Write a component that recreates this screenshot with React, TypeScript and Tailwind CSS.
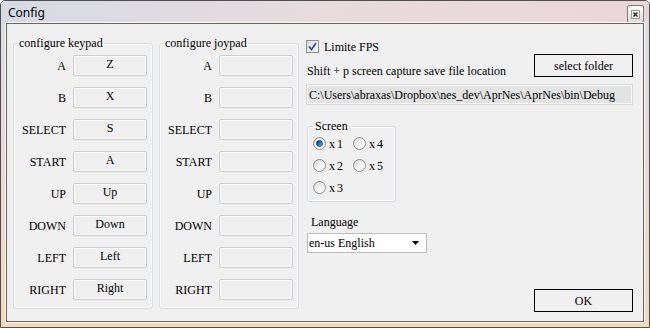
import React from "react";

const keys = ["A", "B", "SELECT", "START", "UP", "DOWN", "LEFT", "RIGHT"];
const keypad = ["Z", "X", "S", "A", "Up", "Down", "Left", "Right"];

function Field({ value }: { value?: string }) {
  return (
    <div className="w-[74px] h-[21px] rounded-[2px] border border-[#cdcdcd] bg-[#f0f0f0] shadow-[inset_0_0_0_1px_#fbfbfb] flex justify-center text-[12px] leading-[17px] text-black">
      {value ?? ""}
    </div>
  );
}

function Group({ title, values }: { title: string; values?: string[] }) {
  return (
    <fieldset className="w-[140px] rounded-[3px] border border-[#d5dfe5] px-[5px] pt-[5px] pb-[8px] shadow-[inset_0_0_0_1px_#fafafa]">
      <legend className="px-[1px] -ml-[1px] text-[12px] leading-[14px] text-black">{title}</legend>
      <div className="flex flex-col gap-[11px]">
        {keys.map((k, i) => (
          <div key={k} className="flex items-center gap-[7px]">
            <div className="w-[47px] text-right text-[12px] leading-[14px] text-black">{k}</div>
            <Field value={values ? values[i] : undefined} />
          </div>
        ))}
      </div>
    </fieldset>
  );
}

function Radio({ checked, label }: { checked?: boolean; label: string }) {
  return (
    <div className="flex items-center h-[13px] gap-[3px]">
      <div className="w-[13px] h-[13px] rounded-full border border-[#8e8f8f] bg-gradient-to-br from-[#d6d6d6] via-[#f4f4f4] to-[#ffffff] flex items-center justify-center">
        {checked ? (
          <div className="w-[7px] h-[7px] rounded-full bg-gradient-to-br from-[#0d3f7a] via-[#1c78c8] to-[#5ec3f7] border border-[#0f3e74]" />
        ) : null}
      </div>
      <span className="text-[12px] leading-[14px] tracking-[2px] text-black">{label}</span>
    </div>
  );
}

export default function App() {
  return (
    <div className="w-[650px] h-[328px] border border-[#505050] rounded-t-[5px] flex flex-col bg-gradient-to-b from-[#dcdfe7] via-[#ead9dc] to-[#f3dbb8] overflow-hidden font-['Liberation_Serif','DejaVu_Serif',serif]">
      {/* title bar */}
      <div className="h-[22px] flex items-center justify-between bg-gradient-to-r from-[#d6dae4] via-[#e8dcdf] to-[#ead6da] pl-[7px] pr-[5px]">
        <span className="text-[12px] leading-[16px] text-black mt-[1px] font-['Noto_Sans','Open_Sans',sans-serif]">
          Config
        </span>
        <div className="w-[17px] h-[18px] mt-[4px] rounded-[2px] border border-[#7d7d7d] bg-gradient-to-b from-[#ffffff] to-[#dcdcdc] flex items-center justify-center">
          <svg width="9" height="9" viewBox="0 0 9 9">
            <rect x="0.5" y="0.5" width="8" height="8" fill="#f4f4f4" stroke="#9a9a9a" />
            <path d="M2.5 2.5 L6.5 6.5 M6.5 2.5 L2.5 6.5" stroke="#222" strokeWidth="1.3" />
          </svg>
        </div>
      </div>

      {/* body with frame */}
      <div className="flex-1 px-[5px] pb-[5px] flex">
        <div className="flex-1 border border-[#646464] shadow-[0_0_0_1px_#fff8ee] bg-[#f0f0f0] flex items-start pl-[6px] pt-[12px]">
          <Group title="configure keypad" values={keypad} />
          <div className="ml-[6px]">
            <Group title="configure joypad" />
          </div>

          {/* right column */}
          <div className="ml-[7px] w-[327px] pt-[4px] flex flex-col">
            <div className="h-[13px] flex items-center gap-[5px]">
              <div className="w-[13px] h-[13px] border border-[#8e8f8f] bg-gradient-to-br from-[#d8d8d8] to-[#ffffff] flex items-center justify-center">
                <svg width="9" height="9" viewBox="0 0 9 9">
                  <path d="M1 4.5 L3.5 7.5 L8 1" fill="none" stroke="#2c4f9e" strokeWidth="1.8" />
                </svg>
              </div>
              <span className="text-[12px] leading-[14px] text-black">Limite FPS</span>
            </div>

            <div className="mt-[1px] flex items-end justify-between">
              <span className="ml-[1px] mb-[-1px] text-[12px] leading-[14px] text-black">
                Shift + p screen capture save file location
              </span>
              <button className="w-[99px] h-[23px] border border-black bg-[#f0f0f0] text-[12px] leading-[14px] text-black">
                select folder
              </button>
            </div>

            <div className="mt-[7px] h-[21px] border border-[#dadada] bg-[#e3e3e3] flex items-center pl-[2px] text-[12px] leading-[14px] text-black shadow-[inset_0_0_0_1px_#f7f7f7]">
              C:\Users\abraxas\Dropbox\nes_dev\AprNes\AprNes\bin\Debug
            </div>

            <fieldset className="mt-[14px] ml-[1px] w-[89px] rounded-[3px] border border-[#d5dfe5] pl-[5px] pt-[4px] pb-[7px] shadow-[inset_0_0_0_1px_#fafafa]">
              <legend className="ml-[1px] px-[1px] text-[12px] leading-[14px] text-black">Screen</legend>
              <div className="grid grid-cols-[40px_40px] gap-y-[9px]">
                <Radio checked label="x1" />
                <Radio label="x4" />
                <Radio label="x2" />
                <Radio label="x5" />
                <Radio label="x3" />
              </div>
            </fieldset>

            <div className="mt-[13px] ml-[5px] text-[12px] leading-[14px] text-black">Language</div>

            <div className="mt-[4px] ml-[1px] w-[120px] h-[20px] border border-[#bcbcbc] bg-white flex items-center justify-between pl-[1px] pr-[7px] text-[12px] leading-[14px] text-black">
              <span>en-us English</span>
              <svg width="7" height="4" viewBox="0 0 7 4">
                <path d="M0 0 H7 L3.5 4 Z" fill="#000" />
              </svg>
            </div>

            <button className="mt-[36px] self-end w-[99px] h-[23px] border border-black bg-[#f0f0f0] text-[12px] leading-[14px] text-black">
              OK
            </button>
          </div>
        </div>
      </div>
    </div>
  );
}
